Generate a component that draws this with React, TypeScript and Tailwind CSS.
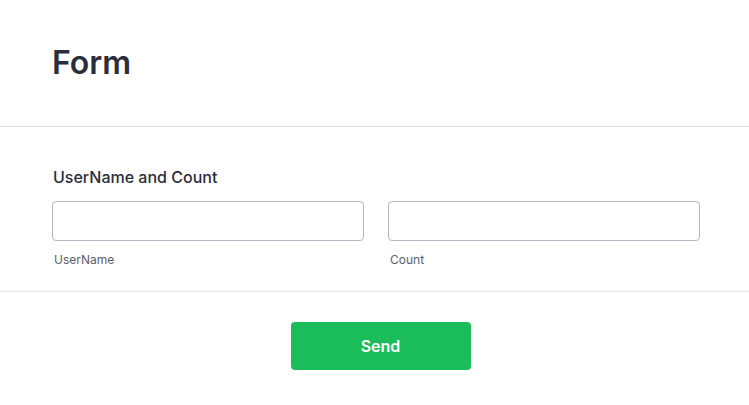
import React from 'react';

const Field: React.FC<{ label: string }> = ({ label }) => (
  <div className="flex flex-col">
    <input
      type="text"
      className="h-10 w-full rounded-[4px] border border-[#b4b5c2] bg-white px-3 text-sm outline-none"
    />
    <span className="mt-[11px] pl-[2px] text-xs leading-4 text-[#5b5e6e]">{label}</span>
  </div>
);

const App: React.FC = () => {
  return (
    <div className="min-h-[405px] w-full bg-white" style={{ fontFamily: 'Inter, "Noto Sans", sans-serif' }}>
      <header className="h-[127px] border-b border-[#dcdce3] pl-[52px] pt-[43px]">
        <h1 className="text-[32px] font-semibold leading-10 text-[#2a2d3c]">Form</h1>
      </header>

      <section className="border-b border-[#e6e4dc] pl-[52px] pr-[49px] pt-[38px] pb-[23px]">
        <h2 className="mb-[12px] pl-[1px] text-base font-medium leading-6 text-[#2a2d3c]">UserName and Count</h2>
        <div className="grid grid-cols-2 gap-[24px]">
          <Field label="UserName" />
          <Field label="Count" />
        </div>
      </section>

      <div className="flex justify-center pl-3 pt-[30px]">
        <button className="h-12 w-[180px] rounded-[4px] bg-[#1bbd5a] text-base font-semibold text-white">
          Send
        </button>
      </div>
    </div>
  );
};

export default App;
